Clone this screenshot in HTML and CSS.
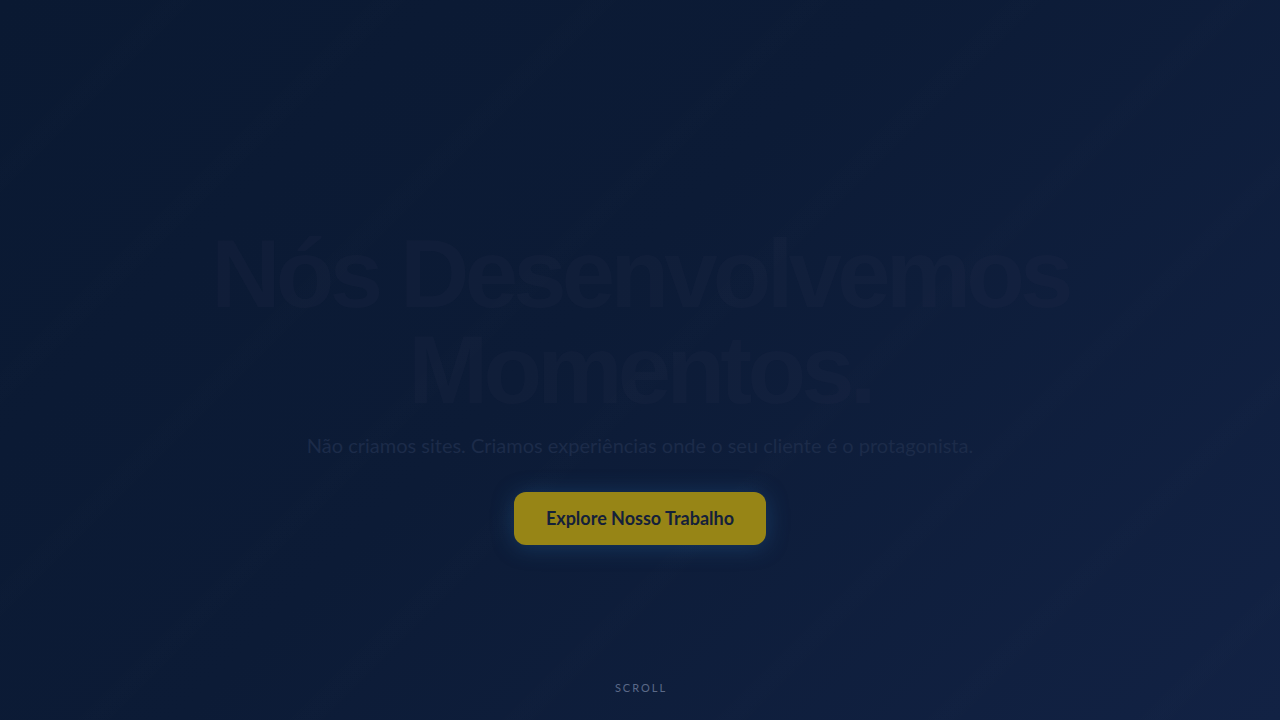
FILE: index.html
```html
<!DOCTYPE html>
<html lang="pt-BR">
<head>
<meta charset="utf-8">
<title>Nós Desenvolvemos Momentos.</title>
<link rel="stylesheet" href="styles.css">
</head>
<body>
<section class="hero">
  <div class="hero-content">
    <h1 class="hero-title">Nós Desenvolvemos<br>Momentos.</h1>
    <p class="hero-sub">Não criamos sites. Criamos experiências onde o seu cliente é o protagonista.</p>
    <a class="hero-btn" href="#">Explore Nosso Trabalho</a>
  </div>
  <div class="scroll-hint">SCROLL</div>
</section>
</body>
</html>
```

FILE: styles.css
```css
* { box-sizing: border-box; }
html, body { margin: 0; padding: 0; }
body {
  background: #0b1a33;
  font-family: Lato, "Noto Sans", sans-serif;
}
.hero {
  position: relative;
  width: 100%;
  height: 720px;
  overflow: hidden;
  display: flex;
  align-items: center;
  justify-content: center;
  padding-top: 50px;
  background:
    repeating-linear-gradient(135deg, rgba(255,255,255,0) 0px, rgba(255,255,255,0) 100px, rgba(255,255,255,0.004) 125px, rgba(255,255,255,0) 150px),
    linear-gradient(135deg, #0a1932 0%, #0c1b36 45%, #122244 100%);
}
.hero-content {
  display: flex;
  flex-direction: column;
  align-items: center;
  text-align: center;
}
.hero-title {
  margin: 0;
  font-family: "Liberation Sans", Arial, sans-serif;
  font-weight: 700;
  font-size: 96px;
  line-height: 96px;
  letter-spacing: -0.05em;
  color: rgba(40, 50, 75, 0.17);
}
.hero-sub {
  margin: 11px 0 0;
  font-size: 20px;
  line-height: 32px;
  color: #1c2b49;
}
.hero-btn {
  margin-top: 31px;
  display: inline-block;
  padding: 12px 32px;
  font-size: 18px;
  line-height: 29px;
  font-weight: 700;
  color: #14203a;
  text-decoration: none;
  background: #978516;
  border-radius: 12px;
  box-shadow: 0 2px 22px rgba(40, 110, 170, 0.35);
}
.scroll-hint {
  position: absolute;
  left: 0;
  right: 0;
  bottom: 26px;
  text-align: center;
  font-size: 11px;
  line-height: 12px;
  letter-spacing: 2px;
  padding-left: 2px;
  color: #5b6988;
}
```
